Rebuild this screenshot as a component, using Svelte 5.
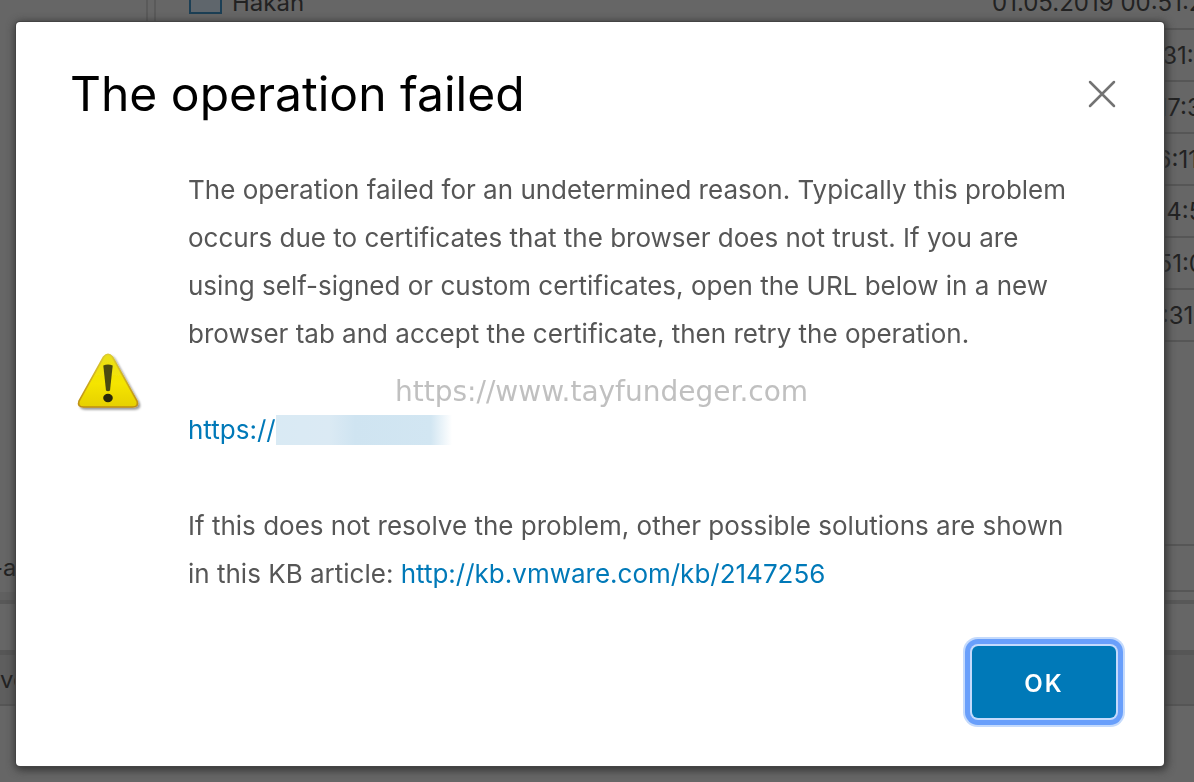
<script>
  const rows = [
    { name: 'Hakan', modified: '01.05.2019 00:51:22' },
    { name: '', modified: '30.04.2019 20:31:15' },
    { name: '', modified: '01.05.2019 00:17:35' },
    { name: '', modified: '01.05.2019 11:16:11' },
    { name: '', modified: '01.05.2019 22:14:52' },
    { name: '', modified: '01.05.2019 00:51:07' },
    { name: '', modified: '11.04.2019 11:11:31' }
  ]
  let open = $state(true)
  const close = () => {
    open = false
  }
</script>

<div class="page">
  <div class="workspace">
    <nav><span>-a</span></nav>
    <div class="content">
      <table>
        <tbody>
          {#each rows as row}
            <tr>
              <td>
                {#if row.name}
                  <span class="folder"></span>{row.name}
                {/if}
              </td>
              <td class="date">{row.modified}</td>
            </tr>
          {/each}
        </tbody>
      </table>
      <div class="footer"></div>
    </div>
  </div>
  <div class="toolbar"></div>
  <div class="tasks">ver</div>
</div>

{#if open}
  <div class="backdrop">
    <div class="dialog" role="dialog" aria-modal="true" aria-labelledby="title">
      <header>
        <h1 id="title">The operation failed</h1>
        <button class="close" aria-label="Close" onclick={close}>
          <svg viewBox="0 0 28 28" width="28" height="28">
            <path d="M2 2 26 26M26 2 2 26" fill="none" stroke="#737373" stroke-width="2.5" stroke-linecap="round" />
          </svg>
        </button>
      </header>

      <div class="body">
        <svg class="warning" viewBox="0 0 68 62" width="68" height="62" aria-hidden="true">
          <defs>
            <linearGradient id="fill" x1="0" y1="0" x2="0" y2="1">
              <stop offset="0" stop-color="#e9df18" />
              <stop offset="0.55" stop-color="#f5e500" />
              <stop offset="1" stop-color="#e6d000" />
            </linearGradient>
            <linearGradient id="edge" x1="0" y1="0" x2="0" y2="1">
              <stop offset="0" stop-color="#dccb32" />
              <stop offset="1" stop-color="#bd8d12" />
            </linearGradient>
            <filter id="shadow" x="-10%" y="-10%" width="130%" height="130%">
              <feDropShadow dx="2" dy="2" stdDeviation="1.3" flood-color="#000" flood-opacity="0.4" />
            </filter>
          </defs>
          <path
            d="M27.5 6Q32 0.500 36.500 6L61 50Q63 56 56.500 56H7.500Q1 56 3 50Z"
            fill="url(#fill)"
            stroke="url(#edge)"
            stroke-width="1.6"
            filter="url(#shadow)"
          />
          <path d="M27.300 14.500Q32 12.500 36.700 14.500L34 39.500Q32 41 30 39.500Z" fill="#4b4a10" />
          <ellipse cx="32" cy="47" rx="4.800" ry="4.200" fill="#28270a" />
        </svg>
        <div class="text">
          <p>
            The operation failed for an undetermined reason. Typically this problem<br />
            occurs due to certificates that the browser does not trust. If you are<br />
            using self-signed or custom certificates, open the URL below in a new<br />
            browser tab and accept the certificate, then retry the operation.
          </p>
          <p class="address"><a href="https://">https://</a><span class="masked"></span></p>
          <p>
            If this does not resolve the problem, other possible solutions are shown<br />
            in this KB article: <a href="http://kb.vmware.com/kb/2147256">http://kb.vmware.com/kb/2147256</a>
          </p>
          <span class="watermark">https://www.tayfundeger.com</span>
        </div>
      </div>

      <footer>
        <button class="ok" onclick={close}>OK</button>
      </footer>
    </div>
  </div>
{/if}

<style>
  :global(body) {
    margin: 0;
    overflow: hidden;
    background: #666;
    font-family: Inter, "Liberation Sans", sans-serif;
  }
  .page {
    height: 100vh;
    overflow: hidden;
    font-size: 24px;
    color: #222;
  }
  .workspace {
    display: flex;
    box-sizing: border-box;
    height: 600px;
  }
  nav {
    display: flex;
    align-items: flex-end;
    box-sizing: border-box;
    width: 148px;
    padding-bottom: 8px;
    border-right: 2px solid #5a5a5a;
    border-bottom: 8px solid #606060;
  }
  nav span {
    margin-left: -8px;
    line-height: 32px;
  }
  .content {
    display: flex;
    flex: 1;
    flex-direction: column;
    justify-content: space-between;
    margin-left: 6px;
    border-left: 2px solid #5a5a5a;
    padding-bottom: 8px;
  }
  table {
    width: 100%;
    margin-top: -23px;
    border-collapse: collapse;
  }
  td {
    box-sizing: border-box;
    height: 52px;
    padding: 0 0 0 33px;
    border-bottom: 2px solid #565656;
    white-space: nowrap;
  }
  td.date {
    width: 202px;
    max-width: 202px;
    padding: 0;
    overflow: hidden;
  }
  .folder {
    display: inline-block;
    box-sizing: border-box;
    width: 33px;
    height: 24px;
    margin-right: 10px;
    border: 2px solid #1c3f55;
    background: #5f666c;
    vertical-align: -3px;
  }
  .footer {
    height: 44px;
    border-top: 2px solid #565656;
    border-bottom: 2px solid #565656;
  }
  .toolbar {
    height: 46px;
    border-top: 4px solid #585858;
    border-bottom: 5px solid #565656;
  }
  .tasks {
    height: 49px;
    border-bottom: 2px solid #555;
    background: #5e5e5e;
    line-height: 49px;
  }
  .backdrop {
    position: fixed;
    inset: 0;
    display: flex;
    box-sizing: border-box;
    padding: 22px 30px 16px 16px;
  }
  .dialog {
    display: flex;
    flex: 1;
    flex-direction: column;
    box-sizing: border-box;
    padding: 48px 48px 48px 54px;
    border-radius: 4px;
    background: #fff;
    box-shadow: 0 0 0 1px #444, 1px 2px 8px 2px #333;
  }
  header {
    display: flex;
    align-items: center;
    justify-content: space-between;
  }
  h1 {
    margin: 0;
    color: #000;
    font-size: 48px;
    font-weight: 400;
    line-height: 48px;
  }
  button {
    font-family: inherit;
    cursor: pointer;
  }
  .close {
    display: flex;
    padding: 0;
    border: none;
    background: none;
  }
  .body {
    display: flex;
    align-items: center;
    gap: 44px;
    margin-top: 48px;
    padding-left: 6px;
  }
  .warning {
    flex: none;
  }
  .text {
    position: relative;
    flex: 1;
    color: #565656;
    font-size: 26px;
    line-height: 48px;
    white-space: nowrap;
  }
  p {
    margin: 0;
  }
  a {
    color: #0079b8;
    text-decoration: none;
  }
  .address {
    display: flex;
    align-items: center;
    margin: 48px 0;
  }
  .masked {
    width: 176px;
    height: 30px;
    background: linear-gradient(90deg, #d9eaf4, #dbeaf4 30%, #cfe4f1 45%, #d2e6f2 88%, #fff);
  }
  .watermark {
    position: absolute;
    top: 202px;
    left: 207px;
    color: #c0c0c0;
    font-family: "DejaVu Sans", sans-serif;
    font-size: 28px;
  }
  footer {
    display: flex;
    justify-content: flex-end;
    margin-top: auto;
  }
  .ok {
    width: 144px;
    height: 72px;
    padding: 2px 0 0;
    border: none;
    border-radius: 6px;
    background: #0079b8;
    color: #fff;
    font-size: 24px;
    font-weight: 600;
    letter-spacing: 2px;
    outline: none;
    box-shadow: 0 0 0 2px #c4dafc, 0 0 0 7px #699ffb, 0 0 0 9px #c4dafc;
  }
</style>
